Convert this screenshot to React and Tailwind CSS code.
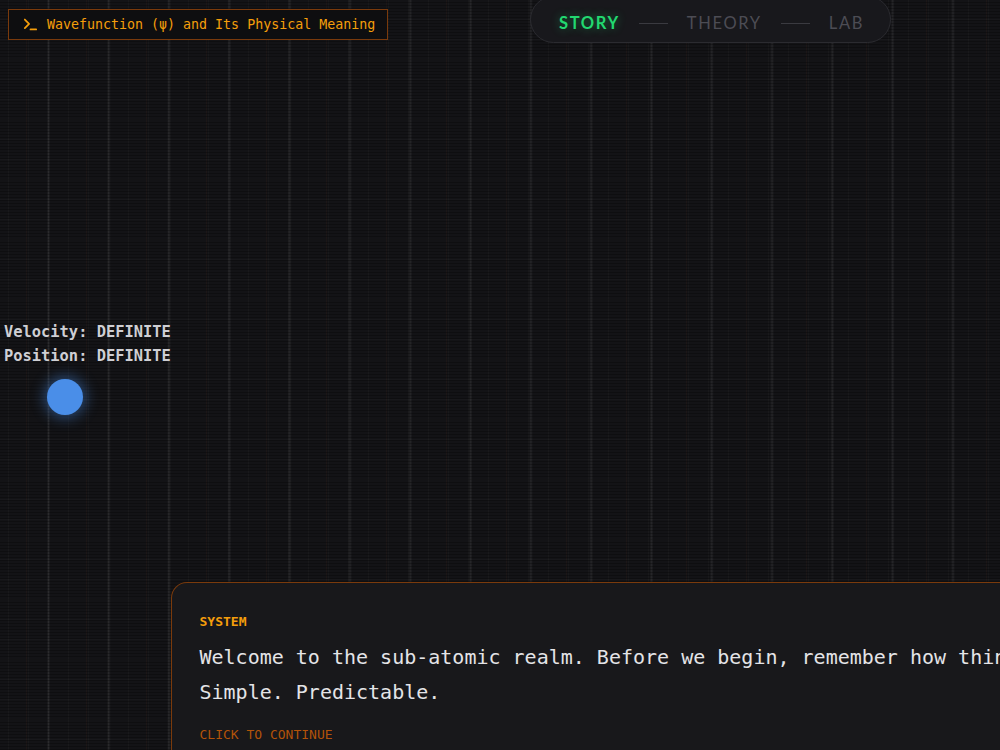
import React from 'react';
import { Terminal } from 'lucide-react';

const mono = "font-['DejaVu_Sans_Mono','Liberation_Mono',monospace]";

const App = () => {
  return (
    <div className="relative w-[1000px] h-[750px] overflow-hidden bg-[#131316]">
      {/* Canvas grid */}
      <div className="absolute inset-0 [background-image:linear-gradient(90deg,rgba(255,255,255,0.022)_1px,transparent_1px)] [background-size:20px_100%] [background-position:8px_0]"></div>
      <div className="absolute inset-0 [background-image:linear-gradient(90deg,rgba(200,90,40,0.05)_1px,transparent_1px)] [background-size:60px_100%] [background-position:26px_0]"></div>
      <div className="absolute inset-0 [background-image:linear-gradient(90deg,transparent_0,rgba(255,255,255,0.08)_1px,rgba(255,255,255,0.08)_2px,transparent_3px)] [background-size:60.3px_100%] [background-position:47px_0]"></div>
      <div className="absolute inset-0 [background-image:repeating-linear-gradient(0deg,rgba(0,0,0,0.28)_0,rgba(0,0,0,0.28)_1px,transparent_1px,transparent_3px)]"></div>
      <div className="absolute inset-0 [background-image:linear-gradient(0deg,rgba(255,255,255,0.02)_1px,transparent_1px)] [background-size:100%_20px]"></div>

      {/* Particle */}
      <div className={`absolute left-[4px] top-[320px] text-[15.4px] leading-[24px] font-bold text-[#cfcfd4] ${mono}`}>
        <div>Velocity: DEFINITE</div>
        <div>Position: DEFINITE</div>
      </div>
      <div className="absolute left-[47px] top-[379px] w-9 h-9 rounded-full bg-[#4a8ee8] shadow-[0_0_14px_3px_rgba(74,142,232,0.45)]"></div>

      <div className="relative w-[1421px] h-full flex flex-col">
        {/* Header */}
        <div className="flex items-start justify-between">
          <div className="flex items-center gap-2 ml-2 mt-[9px] h-[31px] pl-[13px] pr-[12px] border border-[#7a3a0c] bg-[#0e0e10]">
            <Terminal className="w-[17px] h-[17px] text-[#f59e0b]" strokeWidth={2.5} />
            <span className={`text-[13.3px] text-[#f59e0b] ${mono}`}>Wavefunction (ψ) and Its Physical Meaning</span>
          </div>
        </div>

        <div className="absolute left-[530px] top-[-4px] w-[361px] h-[47px] rounded-full border border-[#2b2b30] bg-[#18181c] flex items-center justify-center gap-[19px] pt-[7px] pl-[2px] font-['Lato','Open_Sans',sans-serif] text-[16.5px] tracking-[0.1em]">
          <span className="font-bold text-[#22d870] [text-shadow:0_0_10px_rgba(34,216,112,0.45)]">STORY</span>
          <span className="w-[29px] h-px bg-[#3a3a40]"></span>
          <span className="text-[#4c4c54]">THEORY</span>
          <span className="w-[29px] h-px bg-[#3a3a40]"></span>
          <span className="text-[#4c4c54]">LAB</span>
        </div>

        {/* Dialogue */}
        <div className="mt-auto mx-auto w-[1080px] h-[168px] rounded-t-[16px] border border-b-0 border-[#7a3a0c] bg-[#18181b] px-7 pt-[31px]">
          <div className={`text-[13px] font-bold text-[#f59e0b] leading-4 ${mono}`}>SYSTEM</div>
          <p className={`mt-[10px] text-[20px] leading-[35px] text-[#e4e4e7] whitespace-nowrap ${mono}`}>
            Welcome to the sub-atomic realm. Before we begin, remember how things behave.
            <br />
            Simple. Predictable.
          </p>
          <div className={`mt-[15px] text-[13px] text-[#b45309] ${mono}`}>CLICK TO CONTINUE</div>
        </div>
      </div>
    </div>
  );
};

export default App;
